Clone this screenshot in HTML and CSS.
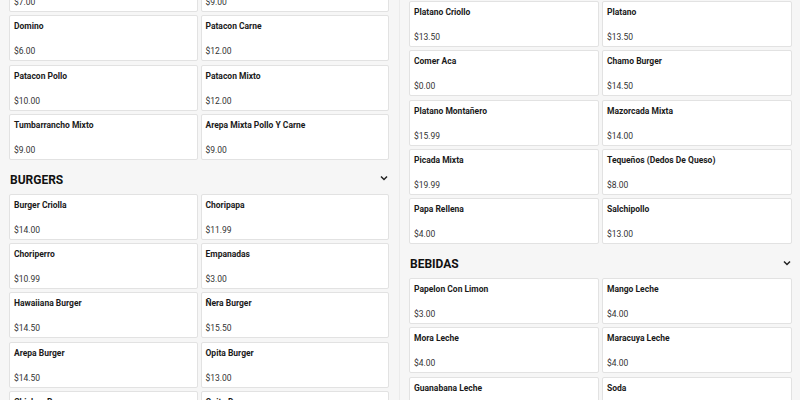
FILE: index.html
```html
<!DOCTYPE html>
<html>
<head>
<meta charset="utf-8">
<link rel="stylesheet" href="styles.css">
</head>
<body>
<div class="page">
  <div class="col col-left">
    <div class="grid">
      <div class="card"><div class="name">Arepa Pollo</div><div class="price">$7.00</div></div>
      <div class="card"><div class="name">Arepa Carne</div><div class="price">$9.00</div></div>
      <div class="card"><div class="name">Domino</div><div class="price">$6.00</div></div>
      <div class="card"><div class="name">Patacon Carne</div><div class="price">$12.00</div></div>
      <div class="card"><div class="name">Patacon Pollo</div><div class="price">$10.00</div></div>
      <div class="card"><div class="name">Patacon Mixto</div><div class="price">$12.00</div></div>
      <div class="card"><div class="name">Tumbarrancho Mixto</div><div class="price">$9.00</div></div>
      <div class="card"><div class="name">Arepa Mixta Pollo Y Carne</div><div class="price">$9.00</div></div>
    </div>
    <div class="heading"><span>BURGERS</span><svg class="chev" width="10" height="10" viewBox="0 0 10 10"><polyline points="2,3.5 5,6.5 8,3.5" fill="none" stroke="#222" stroke-width="1.5"/></svg></div>
    <div class="grid">
      <div class="card"><div class="name">Burger Criolla</div><div class="price">$14.00</div></div>
      <div class="card"><div class="name">Choripapa</div><div class="price">$11.99</div></div>
      <div class="card"><div class="name">Choriperro</div><div class="price">$10.99</div></div>
      <div class="card"><div class="name">Empanadas</div><div class="price">$3.00</div></div>
      <div class="card"><div class="name">Hawaiiana Burger</div><div class="price">$14.50</div></div>
      <div class="card"><div class="name">Ñera Burger</div><div class="price">$15.50</div></div>
      <div class="card"><div class="name">Arepa Burger</div><div class="price">$14.50</div></div>
      <div class="card"><div class="name">Opita Burger</div><div class="price">$13.00</div></div>
      <div class="card"><div class="name">Chicken Burger</div><div class="price">$13.00</div></div>
      <div class="card"><div class="name">Opita Dog</div><div class="price">$10.00</div></div>
    </div>
  </div>
  <div class="col col-right">
    <div class="grid">
      <div class="card"><div class="name">Platano Criollo</div><div class="price">$13.50</div></div>
      <div class="card"><div class="name">Platano</div><div class="price">$13.50</div></div>
      <div class="card"><div class="name">Comer Aca</div><div class="price">$0.00</div></div>
      <div class="card"><div class="name">Chamo Burger</div><div class="price">$14.50</div></div>
      <div class="card"><div class="name">Platano Montañero</div><div class="price">$15.99</div></div>
      <div class="card"><div class="name">Mazorcada Mixta</div><div class="price">$14.00</div></div>
      <div class="card"><div class="name">Picada Mixta</div><div class="price">$19.99</div></div>
      <div class="card"><div class="name">Tequeños (Dedos De Queso)</div><div class="price">$8.00</div></div>
      <div class="card"><div class="name">Papa Rellena</div><div class="price">$4.00</div></div>
      <div class="card"><div class="name">Salchipollo</div><div class="price">$13.00</div></div>
    </div>
    <div class="heading"><span>BEBIDAS</span><svg class="chev" width="10" height="10" viewBox="0 0 10 10"><polyline points="2,3.5 5,6.5 8,3.5" fill="none" stroke="#222" stroke-width="1.5"/></svg></div>
    <div class="grid">
      <div class="card"><div class="name">Papelon Con Limon</div><div class="price">$3.00</div></div>
      <div class="card"><div class="name">Mango Leche</div><div class="price">$4.00</div></div>
      <div class="card"><div class="name">Mora Leche</div><div class="price">$4.00</div></div>
      <div class="card"><div class="name">Maracuya Leche</div><div class="price">$4.00</div></div>
      <div class="card"><div class="name">Guanabana Leche</div><div class="price">$4.00</div></div>
      <div class="card"><div class="name">Soda</div><div class="price">$2.00</div></div>
    </div>
  </div>
</div>
</body>
</html>
```

FILE: styles.css
```css
html, body {
  margin: 0;
  padding: 0;
  height: 400px;
  overflow: hidden;
  background: #f6f6f6;
  font-family: Roboto, "Liberation Sans", sans-serif;
  color: #1e1e1e;
}
.page {
  display: grid;
  grid-template-columns: 400px 400px;
  height: 400px;
  overflow: hidden;
}
.col {
  display: flex;
  flex-direction: column;
  padding: 0 9px;
}
.col-left {
  margin-top: -34px;
  padding-right: 10px;
  border-right: 1px solid #ebebeb;
}
.col-right {
  padding-top: 1px;
  padding-left: 9px;
  padding-right: 8px;
}
.grid {
  display: grid;
  grid-template-columns: 1fr 1fr;
  column-gap: 3px;
  row-gap: 3.25px;
}
.card {
  height: 46px;
  box-sizing: border-box;
  background: #fff;
  border: 1px solid #e2e2e2;
  border-radius: 2px;
  padding: 5px 4px 4px;
  display: flex;
  flex-direction: column;
  justify-content: space-between;
  font-size: 8.5px;
  line-height: 10px;
}
.name {
  font-weight: 700;
  color: #1a1a1a;
}
.price {
  color: #333;
}
.heading {
  display: flex;
  align-items: center;
  justify-content: space-between;
  padding: 13px 0 7px 1px;
  height: 14px;
  font-size: 12px;
  font-weight: 700;
  line-height: 14px;
  color: #111;
}
.chev {
  margin-top: -3px;
}
```
